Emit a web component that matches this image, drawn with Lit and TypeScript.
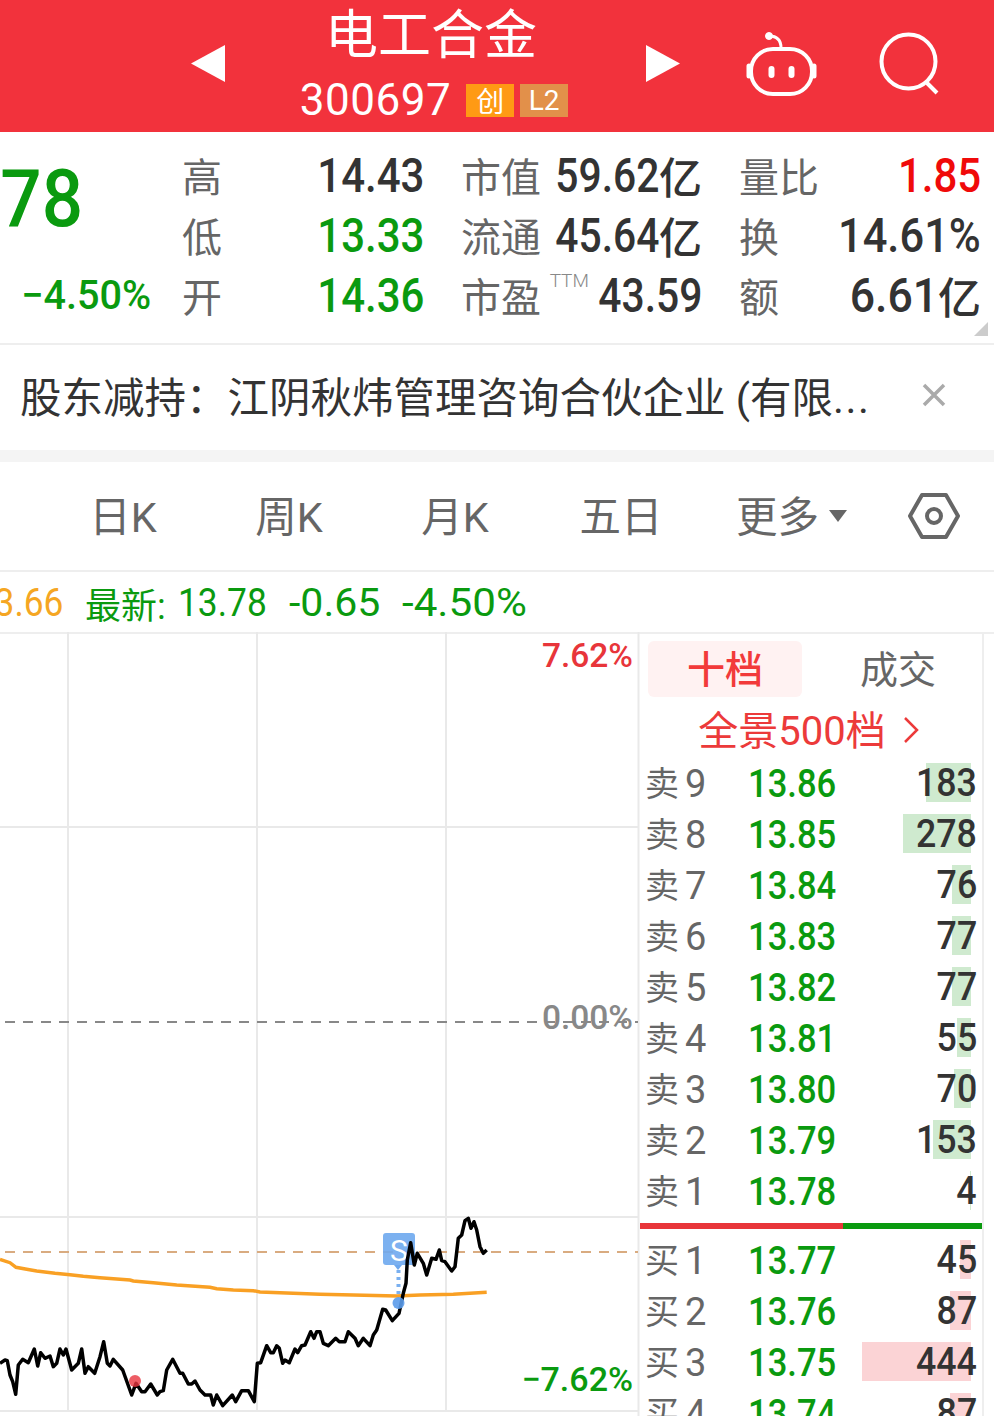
import { LitElement, html, css, svg } from "lit";
import { customElement } from "lit/decorators.js";

const sells = [["9","13.86",183],["8","13.85",278],["7","13.84",76],["6","13.83",77],["5","13.82",77],["4","13.81",55],["3","13.80",70],["2","13.79",153],["1","13.78",4]] as const;
const buys = [["1","13.77",45],["2","13.76",87],["3","13.75",444],["4","13.74",87]] as const;

const z5 = [0,490,15,480,22,482,30,525,38,545,47,583,55,495,68,478,85,488,103,447,113,498,122,458,135,475,150,468,160,500,170,490,180,447,190,465,198,447,215,510,235,490,245,447,255,520,265,500,284,520,300,470,311,425,322,490,330,498,340,478,368,510,395,585,408,550,425,575,435,575,452,552,472,585,480,575,490,572,500,510,518,478,540,520,548,520,565,552,575,552,585,543,600,570,615,585,632,585,640,615,650,585,668,617,697,585,707,605,725,572,745,572,763,605,772,490,782,488,800,437,812,458,820,458,830,437,838,445,848,490,855,480,868,488,885,447,893,458,905,437,915,435,932,395,942,415,950,395,960,395];
const z6 = [10,430,25,437,47,415,58,425,75,425,85,395,105,415,115,437,130,415,150,437,160,405,170,390,188,328,197,330,217,362,237,340,250,280,258,250,262,180,272,128,283,195,292,160,310,190,320,225,335,175,348,178,358,150,365,182,375,185,395,213,405,200,415,115,425,105,435,62,445,55,453,85,462,65,470,90,480,140,490,160,500,150];
const o5 = [0,178,30,188,48,202,80,208,110,213,165,220,210,224,250,229,300,233,390,240,400,243,460,248,530,255,630,262,650,266,700,270,760,272,780,276,960,283];
const o6 = [100,285,230,288,300,285,400,283,500,277];

const toPts = (a: readonly number[], ox: number) => {
  const r: string[] = [];
  for (let i = 0; i < a.length; i += 2) r.push(`${(a[i] / 3 + ox).toFixed(1)},${(a[i + 1] / 3 + 1200).toFixed(1)}`);
  return r.join(" ");
};
const priceLine = toPts(z5, 0) + " " + toPts(z6, 320);
const avgLine = toPts(o5, 0) + " " + toPts(o6, 320);

@customElement("app-root")
export class AppRoot extends LitElement {
  static styles = css`
    :host { display: block; width: 994px; height: 1416px; overflow: hidden; background: #fff;
      font-family: Roboto, "Noto Sans CJK SC", sans-serif; color: #333; }
    .sq { display: inline-block; white-space: nowrap; }
    header { height: 132px; background: #f2323c; display: flex; align-items: flex-start; padding-left: 191px; box-sizing: border-box; color: #fff; }
    .arrow { width: 34px; height: 37px; margin-top: 45px; flex: none; }
    .title { width: 421px; flex: none; display: flex; flex-direction: column; align-items: center; }
    .name { font-size: 53px; line-height: 72px; margin-right: 9px; }
    .code { display: flex; align-items: center; margin-top: 3px; height: 50px; margin-left: 3px; }
    .code b { font-weight: 400; font-size: 44px; letter-spacing: .5px; margin-right: 15px; }
    .badge { width: 48px; height: 33px; display: flex; align-items: center; justify-content: center; font-size: 28px; margin-right: 6px; }
    .b1 { background: #ff9a14; }
    .b2 { background: #e2904a; }
    .bot { width: 80px; height: 80px; margin: 20px 0 0 60px; flex: none; }
    .search { width: 70px; height: 70px; margin: 26px 0 0 55px; flex: none; }

    .stats { border-bottom: 2px solid #eee; position: relative; display: grid;
      grid-template-columns: 183px 241px 278px 279px; grid-auto-rows: 60px; padding-top: 14px; height: 197px; }
    .price { grid-row: 1 / 4; display: flex; flex-direction: column; align-items: flex-end; padding-right: 32px; color: #0a9a0f; font-weight: 500; }
    .big { font-size: 80px; line-height: 104px; margin: 1px 68px 0 0; transform: scaleX(.91); transform-origin: right; }
    .pct { font-size: 40px; line-height: 50px; margin-top: 20px; transform: scaleX(.99); transform-origin: right; }
    .cell { display: flex; align-items: center; justify-content: space-between; font-size: 40px; white-space: nowrap; min-width: 0; }
    .cell.pad { padding-left: 38px; }
    .lab { color: #666; font-size: 40px; line-height: 60px; margin: 6px 0 0 -1px; }
    .val { font-size: 48px; font-weight: 500; transform: scaleX(.875); transform-origin: right; margin-top: -2px; }
    .val.pc { transform: scaleX(.905); }
    .val.wide { transform: scaleX(.93); }
    .val.nar { transform: scaleX(.85); }
    .yi { font-size: 43px; font-weight: 500; margin-top: -2px; }
    .vy { display: flex; align-items: center; margin-left: -12px; }
    .green { color: #0a9a0f; }
    .red { color: #f00a0a; }
    .ttm { font-size: 19px; color: #888; align-self: flex-start; margin: 3px -16px 0 2px; font-weight: 300; }
    .corner { position: absolute; right: 6px; bottom: 7px; width: 14px; height: 14px; }

    .notice { height: 105px; display: flex; align-items: center; padding: 0 48px 6px 20px; box-sizing: border-box; justify-content: space-between; font-size: 41.5px; background: #fff; }
    .notice span { white-space: nowrap; }
    .notice b { font-weight: 400; letter-spacing: 1.5px; }
    .close { width: 24px; height: 24px; flex: none; }
    .band { height: 12px; background: #f4f4f4; }
    .tabs { border-bottom: 2px solid #eee; display: grid; grid-template-columns: repeat(5, 166px) 52px; padding: 0 0 4px 40px; height: 104px; align-items: center; justify-items: center; color: #666; font-size: 41.5px; }
    .tabs .hex { width: 52px; height: 48px; justify-self: start; margin: 4px 0 0 38px; }
    .more { display: flex; align-items: center; margin-left: 9px; }
    .caret { width: 18px; height: 12px; margin: 4px 0 0 10px; }
    .legend { height: 60px; display: flex; align-items: center; font-size: 38px; color: #0a9a0f; white-space: nowrap; padding-top: 2px; box-sizing: border-box; }
    .l0 { width: 63px; display: flex; justify-content: flex-end; color: #f5a623; margin-right: 22px; }
    .l1 { width: 93px; font-size: 36px; flex: none; margin-top: -1px; }
    .lv { transform: scaleX(.93); transform-origin: left; }
    .lv.lr { transform-origin: right; }
    .lv.l65 { transform: scaleX(1.08); }
    .lv.l45 { transform: scaleX(1.11); }
    .l2 { width: 111px; flex: none; }
    .l3 { width: 113px; flex: none; }

    .main { display: flex; border-top: 2px solid #eee; height: 782px; }
    .chart { width: 640px; flex: none; position: relative; height: 784px; margin-top: -2px; }
    .chart svg { display: block; width: 640px; height: 784px; }
    .tag { position: absolute; right: 7px; font-size: 33.5px; font-weight: 500; line-height: 40px; }
    .t1 { top: 4px; color: #e8353a; }
    .t2 { top: 366px; color: #888; }
    .t3 { top: 727px; color: #0a9a0f; font-size: 34px; }

    .panel { width: 344px; flex: none; border-right: 2px solid #eee; box-sizing: border-box; }
    .ptabs { display: flex; margin: 7px 0 0 8px; height: 56px; font-size: 38px; }
    .ptabs div { width: 154px; display: flex; align-items: center; justify-content: center; color: #666; padding-bottom: 5px; box-sizing: border-box; }
    .ptabs .on { background: #fff2f2; border-radius: 6px; color: #f23a3a; font-weight: 500; }
    .ptabs .off { margin-left: 19px; }
    .all { display: flex; align-items: center; justify-content: center; height: 61px; color: #ec3a3a; font-size: 40px; margin-left: -4px; box-sizing: border-box; }
    .all svg { width: 18px; height: 30px; margin-left: 16px; margin-top: 4px; }
    .row { height: 51px; position: relative; display: flex; align-items: center; padding-left: 6px; }
    .l { color: #666; display: flex; align-items: center; width: 104px; flex: none; }
    .l i { font-style: normal; font-size: 34px; width: 40px; margin-bottom: 5px; margin-left: -1px; }
    .l em { font-style: normal; font-size: 38px; transform: scaleX(1); transform-origin: left; }
    .p { color: #0a9a0f; font-size: 38px; font-weight: 500; transform: scaleX(.91); transform-origin: left; flex: none; width: 90px; margin-left: -2px; }
    .q { position: absolute; right: 5px; font-size: 38px; transform: scaleX(.94); transform-origin: right; font-weight: 500; color: #333; line-height: 53px; }
    .bar { position: absolute; right: 11px; top: 5px; height: 39px; }
    .sb { background: #cfeacf; }
    .bb { background: #fbd3d5; }
    .sep { height: 6px; margin: 6px 0; display: flex; background: #0a9a0f; }
    .sep div { width: 203px; background: #e8353a; }
  `;

  private renderRow(l: string, d: string, p: string, q: number, cls: string) {
    return html`<div class="row">
      <div class="bar ${cls}" style="width:${Math.max(1, q * 0.246)}px"></div>
      <div class="l"><i>${l}</i><em class="sq">${d}</em></div>
      <div class="p sq">${p}</div>
      <div class="q sq">${q}</div>
    </div>`;
  }

  private renderChart() {
    const vs = [68, 257, 446];
    const hs = [827, 1217];
    return svg`<svg viewBox="0 632 640 784" xmlns="http://www.w3.org/2000/svg">
      ${vs.map((x) => svg`<line x1=${x} x2=${x} y1="632" y2="1412" stroke="#e9e9e9" stroke-width="2"/>`)}
      <line x1="638.5" x2="638.5" y1="632" y2="1416" stroke="#e9e9e9" stroke-width="2"/>
      ${hs.map((y) => svg`<line x1="0" x2="638" y1=${y} y2=${y} stroke="#e9e9e9" stroke-width="2"/>`)}
      <line x1="0" x2="638" y1="1411" y2="1411" stroke="#e9e9e9" stroke-width="2"/>
      <line x1="5" x2="638" y1="1022" y2="1022" stroke="#888" stroke-width="2" stroke-dasharray="10 8"/>
      <line x1="5" x2="638" y1="1252" y2="1252" stroke="#d9ab80" stroke-width="2" stroke-dasharray="10 8"/>
      <polyline points=${avgLine} fill="none" stroke="#f9a024" stroke-width="3.5"/>
      <rect x="383" y="1233" width="32" height="32" rx="3" fill="#6ea8ee" fill-opacity=".9"/>
      <path d="M394 1265h8l-4 5z" fill="#6ea8ee"/>
      <line x1="398.5" x2="398.5" y1="1270" y2="1296" stroke="#7ab0f0" stroke-width="4" stroke-dasharray="3 4"/>
      <text x="399" y="1261" text-anchor="middle" font-size="30" fill="#fff" font-family="Roboto, sans-serif">S</text>
      <polyline points=${priceLine} fill="none" stroke="#000" stroke-width="3.5" stroke-linejoin="round"/>
      <circle cx="398.5" cy="1303" r="6" fill="#5b9bea" fill-opacity=".9"/>
      <circle cx="135" cy="1381" r="6" fill="#e8353f" fill-opacity=".8"/>
    </svg>`;
  }

  render() {
    return html`
      <header>
        <svg class="arrow" viewBox="0 0 34 37"><path d="M34 0v37L0 18.5z" fill="#fff"/></svg>
        <div class="title">
          <div class="name">电工合金</div>
          <div class="code"><b>300697</b><span class="badge b1">创</span><span class="badge b2">L2</span></div>
        </div>
        <svg class="arrow" viewBox="0 0 34 37"><path d="M0 0v37l34-18.5z" fill="#fff"/></svg>
        <svg class="bot" viewBox="740 20 80 80" fill="none" stroke="#fff" stroke-width="4">
          <rect x="751" y="49" width="61" height="45" rx="22"/>
          <path d="M749 66v10M814 66v10" stroke-width="5" stroke-linecap="round"/>
          <circle cx="769" cy="36" r="3.5" fill="#fff" stroke-width="1"/>
          <path d="M769 36c8 0 12 4 12 12" stroke-width="3"/>
          <rect x="768.5" y="66" width="6" height="12" rx="3" fill="#fff" stroke="none"/>
          <rect x="788.5" y="66" width="6" height="12" rx="3" fill="#fff" stroke="none"/>
        </svg>
        <svg class="search" viewBox="875 26 70 70" fill="none" stroke="#fff" stroke-width="4">
          <circle cx="908.5" cy="61.5" r="27"/>
          <path d="M927 83l10 10"/>
        </svg>
      </header>

      <section class="stats">
        <div class="price">
          <div class="big sq">13.78</div>
          <div class="pct sq">−4.50%</div>
        </div>
        <div class="cell"><span class="lab">高</span><span class="val sq">14.43</span></div>
        <div class="cell pad"><span class="lab">市值</span><span class="vy"><span class="val nar sq">59.62</span><span class="yi">亿</span></span></div>
        <div class="cell pad"><span class="lab">量比</span><span class="val sq red">1.85</span></div>
        <div class="cell"><span class="lab">低</span><span class="val sq green">13.33</span></div>
        <div class="cell pad"><span class="lab">流通</span><span class="vy"><span class="val nar sq">45.64</span><span class="yi">亿</span></span></div>
        <div class="cell pad"><span class="lab">换</span><span class="val sq pc">14.61%</span></div>
        <div class="cell"><span class="lab">开</span><span class="val sq green">14.36</span></div>
        <div class="cell pad"><span class="lab">市盈</span><span class="ttm">TTM</span><span class="val nar sq">43.59</span></div>
        <div class="cell pad"><span class="lab">额</span><span class="vy"><span class="val sq wide">6.61</span><span class="yi">亿</span></span></div>
        <svg class="corner" viewBox="0 0 14 14"><path d="M14 0v14H0z" fill="#ccc"/></svg>
      </section>

      <section class="notice">
        <span>股东减持：江阴秋炜管理咨询合伙企业 (有限<b>...</b></span>
        <svg class="close" viewBox="0 0 24 24"><path d="M2 2l20 20M22 2L2 22" stroke="#aaa" stroke-width="3.5" fill="none"/></svg>
      </section>
      <div class="band"></div>

      <nav class="tabs">
        <span>日K</span><span>周K</span><span>月K</span><span>五日</span>
        <span class="more">更多<svg class="caret" viewBox="0 0 18 12"><path d="M0 0h18L9 12z" fill="#666"/></svg></span>
        <svg class="hex" viewBox="0 0 52 48" fill="none" stroke="#666" stroke-width="4"><path d="M14 3h24l12 21-12 21H14L2 24z" stroke-linejoin="round"/><circle cx="26" cy="24" r="7"/></svg>
      </nav>

      <div class="legend">
        <div class="l0"><span class="lv lr sq">13.66</span></div>
        <div class="l1">最新:</div>
        <div class="l2"><span class="lv sq">13.78</span></div>
        <div class="l3"><span class="lv l65 sq">-0.65</span></div>
        <div><span class="lv l45 sq">-4.50%</span></div>
      </div>

      <div class="main">
        <div class="chart">
          ${this.renderChart()}
          <div class="tag t1">7.62%</div>
          <div class="tag t2">0.00%</div>
          <div class="tag t3">−7.62%</div>
        </div>
        <aside class="panel">
          <div class="ptabs"><div class="on">十档</div><div class="off">成交</div></div>
          <div class="all">全景500档<svg viewBox="0 0 18 30"><path d="M3 3l12 12L3 27" fill="none" stroke="#ec3a3a" stroke-width="2.5"/></svg></div>
          ${sells.map((r) => this.renderRow("卖", r[0], r[1], r[2], "sb"))}
          <div class="sep"><div></div></div>
          ${buys.map((r) => this.renderRow("买", r[0], r[1], r[2], "bb"))}
        </aside>
      </div>
    `;
  }
}
